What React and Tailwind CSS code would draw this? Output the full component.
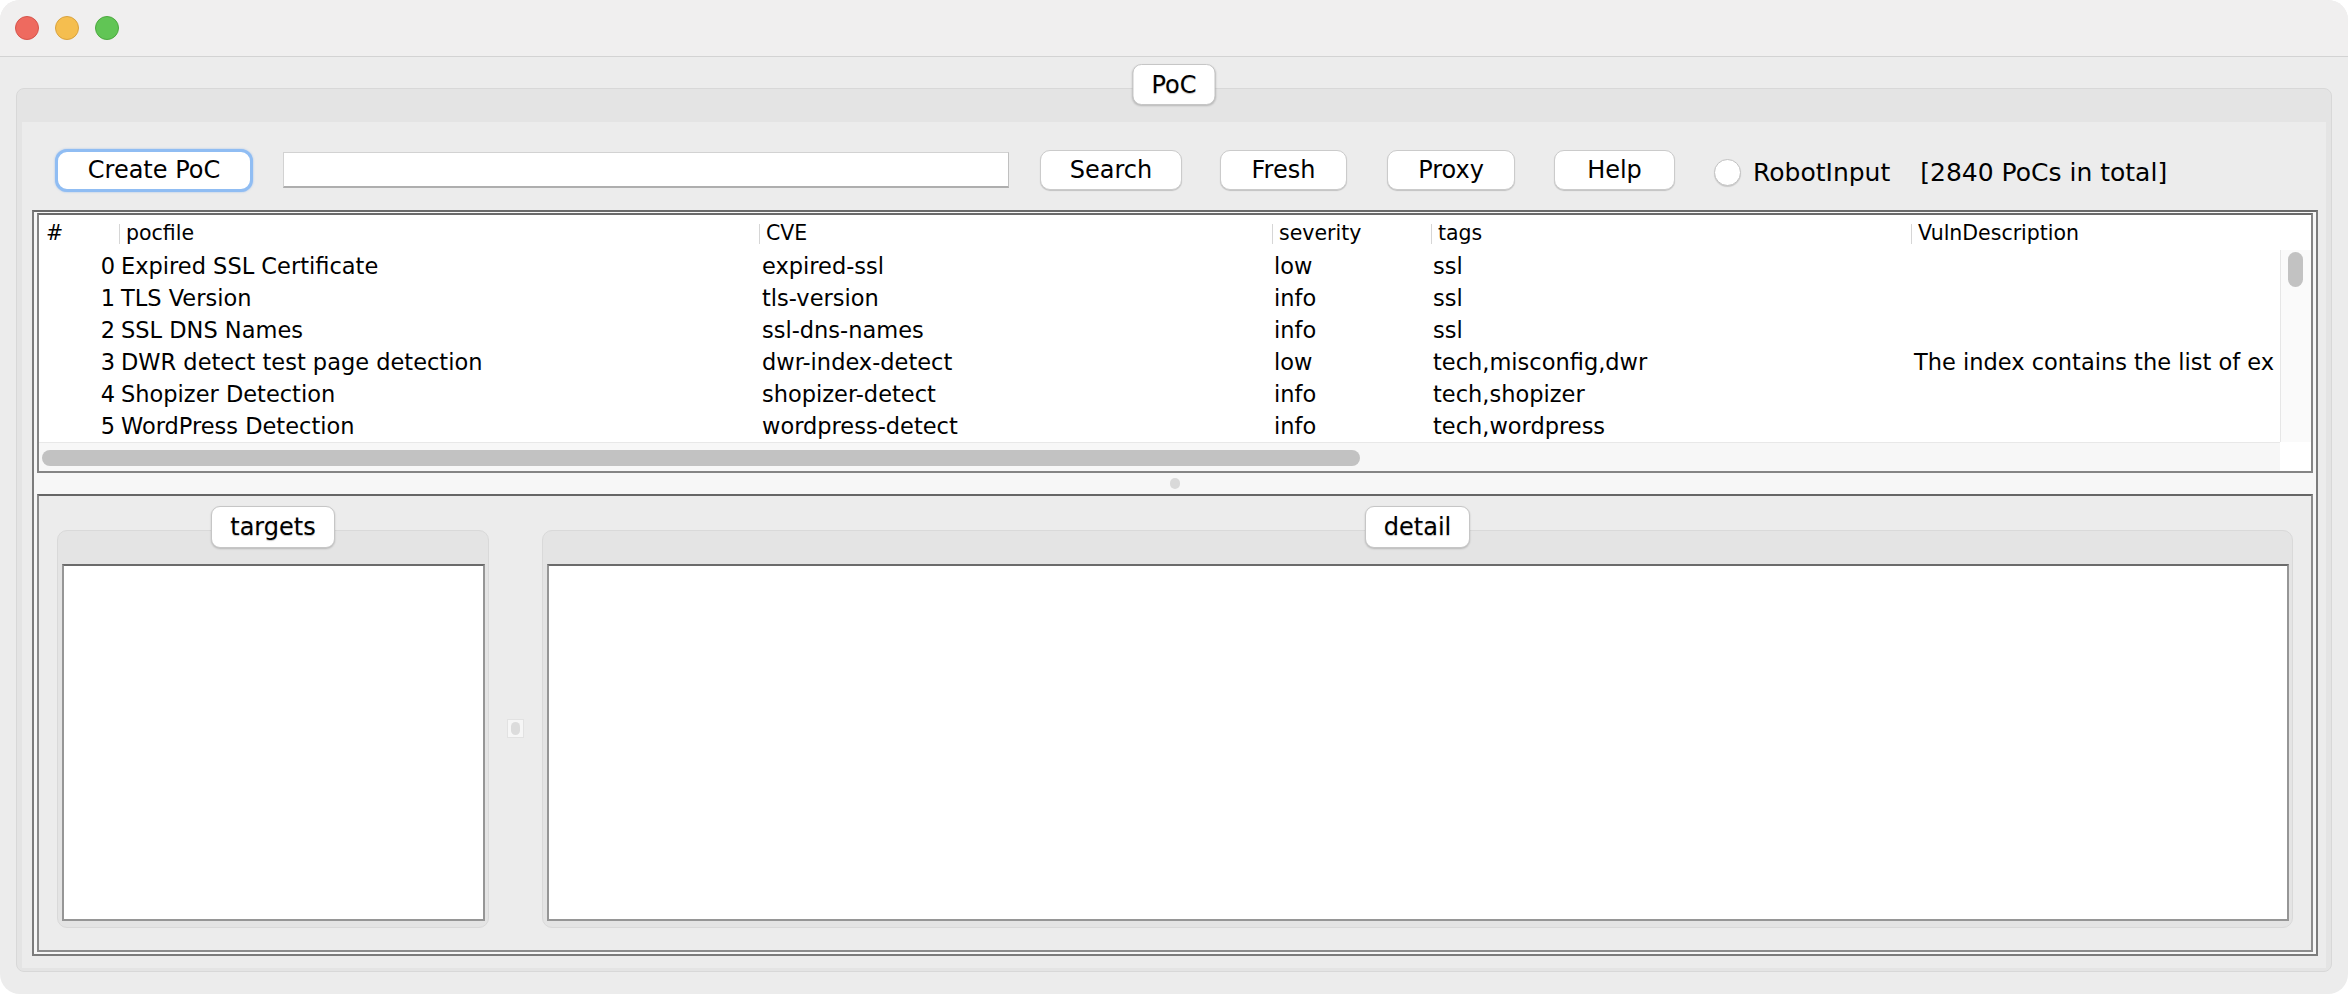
import React from "react";

const rows = [
  ["0", "Expired SSL Certificate", "expired-ssl", "low", "ssl", ""],
  ["1", "TLS Version", "tls-version", "info", "ssl", ""],
  ["2", "SSL DNS Names", "ssl-dns-names", "info", "ssl", ""],
  ["3", "DWR detect test page detection", "dwr-index-detect", "low", "tech,misconfig,dwr", "The index contains the list of ex"],
  ["4", "Shopizer Detection", "shopizer-detect", "info", "tech,shopizer", ""],
  ["5", "WordPress Detection", "wordpress-detect", "info", "tech,wordpress", ""],
];

const colW = ["w-[80px]", "w-[640px]", "w-[513px]", "w-[159px]", "w-[480px]"];

function Btn({ children, w }) {
  return (
    <div className={`${w} h-[40px] shrink-0 bg-white rounded-[10px] border border-[#cbcbcb] shadow-[0_1px_1px_rgba(0,0,0,0.18)] flex items-center justify-center text-[24px] text-black leading-none`}>
      {children}
    </div>
  );
}

function Pill({ children, h = "h-[42px]" }) {
  return (
    <div className={`${h} px-[18px] bg-white rounded-[9px] border border-[#c6c6c6] shadow-[0_1px_2px_rgba(0,0,0,0.2)] flex items-center justify-center text-[24px] text-black leading-none [text-shadow:0_1px_1px_rgba(0,0,0,0.25)]`}>
      {children}
    </div>
  );
}

function HeaderCell({ w, label, first }) {
  if (first) {
    return <div className={`${w} shrink-0 pl-[7px] flex items-center`}>{label}</div>;
  }
  return (
    <div className={`${w} shrink-0 flex items-center`}>
      <span className="w-px h-[20px] bg-[#d6d6d6] shrink-0" />
      <span className="ml-[6px] whitespace-nowrap">{label}</span>
    </div>
  );
}

export default function App() {
  return (
    <div className="w-[2348px] h-[994px] bg-white overflow-hidden font-['DejaVu_Sans',sans-serif] text-black">
      <div className="w-full h-full rounded-[20px] bg-[#ececec] flex flex-col overflow-hidden">
        {/* Title bar */}
        <div className="h-[57px] shrink-0 bg-[#f0efef] border-b border-[#d3d3d3] flex items-center pl-[15px] gap-[16px]">
          <span className="w-[24px] h-[24px] rounded-full bg-[#ee6a5f] border border-[#d5544b]" />
          <span className="w-[24px] h-[24px] rounded-full bg-[#f5be4f] border border-[#d8a23e]" />
          <span className="w-[24px] h-[24px] rounded-full bg-[#61c555] border border-[#4ca83f]" />
        </div>

        {/* Body */}
        <div className="flex-1 pt-[31px] px-[16px] pb-[22px] flex flex-col">
          {/* Tabbed pane */}
          <div className="relative flex-1 rounded-[8px] border border-[#d8d8d8] bg-[#e4e4e4] pt-[33px] px-[5px] pb-[3px] flex flex-col">
            <div className="absolute top-[-25px] left-1/2 -translate-x-1/2">
              <Pill h="h-[41px]">PoC</Pill>
            </div>
            <div className="flex-1 bg-[#ececec] flex flex-col pl-[10px] pr-[8px] pb-[12px]">
              {/* Toolbar */}
              <div className="h-[88px] shrink-0 pt-[8px] flex items-center">
                <div className="ml-[23px] w-[198px] h-[43px] shrink-0 bg-white rounded-[12px] border-[3px] border-[#90bdf3] shadow-[0_0_2px_rgba(80,150,240,0.5)] flex items-center justify-center text-[24px] leading-none">
                  Create PoC
                </div>
                <div className="ml-[30px] w-[726px] h-[36px] shrink-0 bg-white border border-[#d2d2d2] border-b-[2px] border-b-[#aeaeae] border-r-[#c0c0c0]" />
                <div className="ml-[31px]"><Btn w="w-[142px]">Search</Btn></div>
                <div className="ml-[38px]"><Btn w="w-[127px]">Fresh</Btn></div>
                <div className="ml-[40px]"><Btn w="w-[128px]">Proxy</Btn></div>
                <div className="ml-[39px]"><Btn w="w-[121px]">Help</Btn></div>
                <div className="ml-[39px] w-[27px] h-[27px] mt-[4px] shrink-0 rounded-full bg-white border border-[#c2c2c2] shadow-[0_1px_1px_rgba(0,0,0,0.15)]" />
                <div className="ml-[12px] mt-[4px] text-[25px] leading-none whitespace-nowrap">RobotInput</div>
                <div className="ml-[30px] mt-[4px] text-[25px] leading-none whitespace-nowrap">[2840 PoCs in total]</div>
              </div>

              {/* Split pane */}
              <div className="flex-1 border-2 border-[#7c7c7c] border-t-[#696969] bg-[#f7f7f7] px-[3px] pt-[1px] pb-[2px] flex flex-col">
                {/* Table scroll pane */}
                <div className="h-[260px] shrink-0 border-2 border-[#858585] border-t-[#6a6a6a] bg-white flex flex-col">
                  {/* Header */}
                  <div className="h-[35px] shrink-0 pt-[2px] flex text-[20.5px] leading-none overflow-hidden">
                    <HeaderCell w={colW[0]} label="#" first />
                    <HeaderCell w={colW[1]} label="pocfile" />
                    <HeaderCell w={colW[2]} label="CVE" />
                    <HeaderCell w={colW[3]} label="severity" />
                    <HeaderCell w={colW[4]} label="tags" />
                    <HeaderCell w="flex-1" label="VulnDescription" />
                  </div>
                  {/* Body */}
                  <div className="h-[192px] shrink-0 flex">
                    <div className="flex-1 overflow-hidden">
                      {rows.map((r) => (
                        <div key={r[0]} className="h-[32px] flex items-center text-[22.5px] leading-[32px] whitespace-nowrap">
                          <div className={`${colW[0]} shrink-0 text-right pr-[4px]`}>{r[0]}</div>
                          <div className={`${colW[1]} shrink-0 pl-[2px] overflow-hidden`}>{r[1]}</div>
                          <div className={`${colW[2]} shrink-0 pl-[3px] overflow-hidden`}>{r[2]}</div>
                          <div className={`${colW[3]} shrink-0 pl-[2px] overflow-hidden`}>{r[3]}</div>
                          <div className={`${colW[4]} shrink-0 pl-[2px] overflow-hidden`}>{r[4]}</div>
                          <div className="flex-1 pl-[3px]">{r[5]}</div>
                        </div>
                      ))}
                    </div>
                    <div className="w-[31px] shrink-0 bg-[#fafafa] border-l border-[#e6e6e6] pl-[7px] pt-[2px]">
                      <div className="w-[15px] h-[35px] rounded-full bg-[#c2c2c2]" />
                    </div>
                  </div>
                  {/* Horizontal scrollbar */}
                  <div className="flex-1 flex">
                    <div className="flex-1 bg-[#f7f7f7] border-t border-[#e8e8e8] pl-[3px] pt-[7px]">
                      <div className="w-[1318px] h-[16px] rounded-full bg-[#c2c2c2]" />
                    </div>
                    <div className="w-[31px] shrink-0 bg-white" />
                  </div>
                </div>

                {/* Divider */}
                <div className="h-[21px] shrink-0 flex items-center justify-center">
                  <div className="w-[10px] h-[11px] rounded-full bg-[#d9d9d9]" />
                </div>

                {/* Bottom panel */}
                <div className="flex-1 border-2 border-[#8c8c8c] border-t-[#666666] bg-[#ececec] flex pl-[18px] pr-[18px]">
                  {/* targets */}
                  <div className="w-[432px] shrink-0 flex flex-col pt-[10px] pb-[22px]">
                    <div className="relative z-10 flex justify-center -mb-[18px]">
                      <Pill>targets</Pill>
                    </div>
                    <div className="flex-1 rounded-[10px] border border-[#d9d9d9] bg-[#e4e4e4] pt-[33px] pl-[4px] pr-[3px] pb-[6px] flex">
                      <div className="flex-1 bg-white border-2 border-[#969696] border-t-[#6b6b6b]" />
                    </div>
                  </div>
                  {/* vertical divider */}
                  <div className="w-[53px] shrink-0 flex items-center justify-center pt-[10px]">
                    <div className="w-[17px] h-[19px] bg-[#f6f6f6] border border-[#e2e2e2] flex items-center justify-center">
                      <div className="w-[9px] h-[13px] rounded-full bg-[#dcdcdc]" />
                    </div>
                  </div>
                  {/* detail */}
                  <div className="flex-1 flex flex-col pt-[10px] pb-[22px]">
                    <div className="relative z-10 flex justify-center -mb-[18px]">
                      <Pill>detail</Pill>
                    </div>
                    <div className="flex-1 rounded-[10px] border border-[#d9d9d9] bg-[#e4e4e4] pt-[33px] pl-[4px] pr-[3px] pb-[6px] flex">
                      <div className="flex-1 bg-white border-2 border-[#969696] border-t-[#6b6b6b]" />
                    </div>
                  </div>
                </div>
              </div>
            </div>
          </div>
        </div>
      </div>
    </div>
  );
}
